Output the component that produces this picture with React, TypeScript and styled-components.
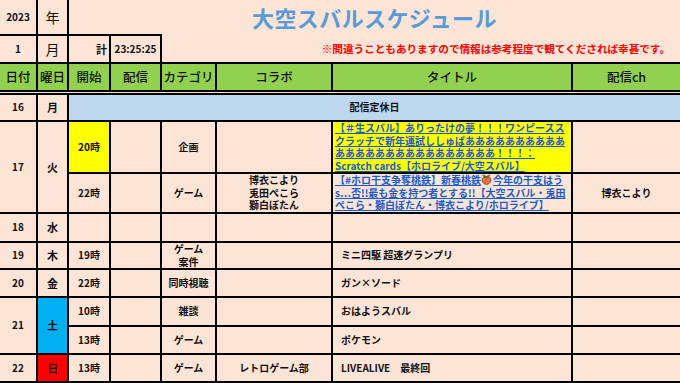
import React from 'react';
import styled, { createGlobalStyle } from 'styled-components';

const PINK = '#fce4d6';

const GlobalStyle = createGlobalStyle`
  html, body {
    margin: 0;
    padding: 0;
    overflow: hidden;
    background: ${PINK};
  }
  body {
    font-family: "Noto Sans CJK JP", "Liberation Sans", sans-serif;
    color: #111;
  }
`;

const Peach = () => (
  <PeachIcon viewBox="0 0 12 12" width="11" height="11">
    <path
      d="M6 3.4C3.2 2 1 4 1.2 6.9 1.5 9.7 4 11.4 6 11.4s4.5-1.7 4.8-4.5C11 4 8.8 2 6 3.4z"
      fill="#f0743a"
      stroke="#6a2a12"
      strokeWidth="0.8"
    />
    <path d="M6 3.6c0 2.5-.6 5-1.6 7" fill="none" stroke="#c24a1c" strokeWidth="0.6" />
    <path
      d="M6 3.4C5.2 1.6 3.4.9 1.8 1.4c.8 1.6 2.6 2.4 4.2 2z"
      fill="#3f9a3a"
      stroke="#1d4a1a"
      strokeWidth="0.6"
    />
    <path
      d="M6 3.4c.6-1.6 2.2-2.4 3.8-2-.6 1.5-2.2 2.3-3.8 2z"
      fill="#57b04a"
      stroke="#1d4a1a"
      strokeWidth="0.6"
    />
  </PeachIcon>
);

const App = () => {
  return (
    <>
      <GlobalStyle />
      <Sheet>
        <colgroup>
          <Col $w={37} />
          <Col $w={31} />
          <Col $w={42} />
          <Col $w={51} />
          <Col $w={55} />
          <Col $w={116} />
          <Col $w={240} />
          <Col $w={108} />
        </colgroup>
        <tbody>
          <Row $h={34}>
            <Cell>2023</Cell>
            <Cell $size={14} $weight={400}>年</Cell>
            <TitleCell colSpan={6}>大空スバルスケジュール</TitleCell>
          </Row>
          <Row $h={28}>
            <Cell>1</Cell>
            <Cell $size={14} $weight={400}>月</Cell>
            <Cell $align="right" $size={11}>計</Cell>
            <Cell>23:25:25</Cell>
            <NoteCell colSpan={4}>
              ※間違うこともありますので情報は参考程度で観てくだされば幸甚です。
            </NoteCell>
          </Row>

          <Row $h={29}>
            <HeadCell>日付</HeadCell>
            <HeadCell>曜日</HeadCell>
            <HeadCell>開始</HeadCell>
            <HeadCell>配信</HeadCell>
            <HeadCell>カテゴリ</HeadCell>
            <HeadCell>コラボ</HeadCell>
            <HeadCell>タイトル</HeadCell>
            <HeadCell>配信ch</HeadCell>
          </Row>

          <Row $h={29}>
            <Cell>16</Cell>
            <Cell $size={11}>月</Cell>
            <Cell colSpan={6} $bg="#bdd7ee">配信定休日</Cell>
          </Row>

          <Row $h={51}>
            <Cell rowSpan={2}>17</Cell>
            <Cell rowSpan={2} $size={11}>火</Cell>
            <Cell $bg="#ffff00">20時</Cell>
            <Cell />
            <Cell>企画</Cell>
            <Cell />
            <TitleText $bg="#ffff00">
              <LinkText>
                【＃生スバル】ありったけの夢！！！ワンピースス
                <br />
                クラッチで新年運試ししゅばああああああああああ
                <br />
                ああああああああああああああああ！！！：
                <br />
                Scratch cards【ホロライブ/大空スバル】
              </LinkText>
            </TitleText>
            <Cell />
          </Row>
          <Row $h={40}>
            <Cell>22時</Cell>
            <Cell />
            <Cell>ゲーム</Cell>
            <Cell>
              博衣こより
              <br />
              兎田ぺこら
              <br />
              獅白ぼたん
            </Cell>
            <TitleText>
              <LinkText>
                【#ホロ干支争奪桃鉄】新春桃鉄<Peach />今年の干支はう
                <br />
                s…否!!最も金を持つ者とする!!【大空スバル・兎田
                <br />
                ぺこら・獅白ぼたん・博衣こより/ホロライブ】
              </LinkText>
            </TitleText>
            <Cell>博衣こより</Cell>
          </Row>

          <Row $h={29}>
            <Cell>18</Cell>
            <Cell $size={11}>水</Cell>
            <Cell />
            <Cell />
            <Cell />
            <Cell />
            <Cell />
            <Cell />
          </Row>

          <Row $h={27}>
            <Cell>19</Cell>
            <Cell $size={11}>木</Cell>
            <Cell>19時</Cell>
            <Cell />
            <Cell>
              ゲーム
              <br />
              案件
            </Cell>
            <Cell />
            <TitleText $pad={8}>ミニ四駆 超速グランプリ</TitleText>
            <Cell />
          </Row>

          <Row $h={28}>
            <Cell>20</Cell>
            <Cell $size={11}>金</Cell>
            <Cell>22時</Cell>
            <Cell />
            <Cell>同時視聴</Cell>
            <Cell />
            <TitleText $pad={8}>ガン×ソード</TitleText>
            <Cell />
          </Row>

          <Row $h={29}>
            <Cell rowSpan={2}>21</Cell>
            <Cell rowSpan={2} $size={11} $bg="#00b0f0">土</Cell>
            <Cell>10時</Cell>
            <Cell />
            <Cell>雑談</Cell>
            <Cell />
            <TitleText $pad={8}>おはようスバル</TitleText>
            <Cell />
          </Row>
          <Row $h={28}>
            <Cell>13時</Cell>
            <Cell />
            <Cell>ゲーム</Cell>
            <Cell />
            <TitleText $pad={8}>ポケモン</TitleText>
            <Cell />
          </Row>

          <Row $h={28}>
            <Cell>22</Cell>
            <Cell $size={11} $bg="#ff0000">日</Cell>
            <Cell>13時</Cell>
            <Cell />
            <Cell>ゲーム</Cell>
            <Cell>レトロゲーム部</Cell>
            <TitleText $pad={8}>LIVEALIVE　最終回</TitleText>
            <Cell />
          </Row>

          <Row $h={20}>
            <Cell />
            <Cell />
            <Cell />
            <Cell />
            <Cell />
            <Cell />
            <Cell />
            <Cell />
          </Row>
        </tbody>
      </Sheet>
    </>
  );
};

export default App;

const Sheet = styled.table`
  width: 680px;
  table-layout: fixed;
  border-collapse: collapse;
  border-style: hidden;
  background: ${PINK};
`;

const Col = styled.col<{ $w: number }>`
  width: ${({ $w }) => $w}px;
`;

const Row = styled.tr<{ $h: number }>`
  height: ${({ $h }) => $h}px;
`;

const Cell = styled.td<{ $bg?: string; $align?: string; $size?: number; $weight?: number }>`
  border: 2px solid #000;
  padding: 0 2px;
  background: ${({ $bg }) => $bg ?? 'transparent'};
  text-align: ${({ $align }) => $align ?? 'center'};
  vertical-align: middle;
  font-size: ${({ $size }) => $size ?? 10}px;
  font-weight: ${({ $weight }) => $weight ?? 700};
  line-height: 12.5px;
  white-space: nowrap;
  overflow: hidden;
`;

const TitleCell = styled.td`
  border: 2px solid #000;
  border-right: none;
  border-bottom: none;
  text-align: center;
  vertical-align: middle;
  font-size: 22px;
  font-weight: 700;
  letter-spacing: 0.4px;
  color: #5b9bd5;
  white-space: nowrap;
`;

const NoteCell = styled.td`
  border: 2px solid #000;
  border-top: none;
  padding-right: 10px;
  text-align: right;
  vertical-align: middle;
  font-size: 10.6px;
  font-weight: 700;
  color: #ff0000;
  white-space: nowrap;
`;

const HeadCell = styled.td`
  border: 2px solid #000;
  border-bottom: 5px double #000;
  background: #92d050;
  text-align: center;
  vertical-align: middle;
  font-size: 12.5px;
  font-weight: 500;
  white-space: nowrap;
`;

const TitleText = styled(Cell)<{ $pad?: number }>`
  text-align: left;
  padding-left: ${({ $pad }) => $pad ?? 2}px;
  line-height: 12.5px;
`;

const LinkText = styled.span`
  color: #1d5cc8;
  text-decoration: underline;
  text-underline-offset: 1px;
`;

const PeachIcon = styled.svg`
  display: inline-block;
  vertical-align: -1px;
  margin: 0 0.5px;
`;
